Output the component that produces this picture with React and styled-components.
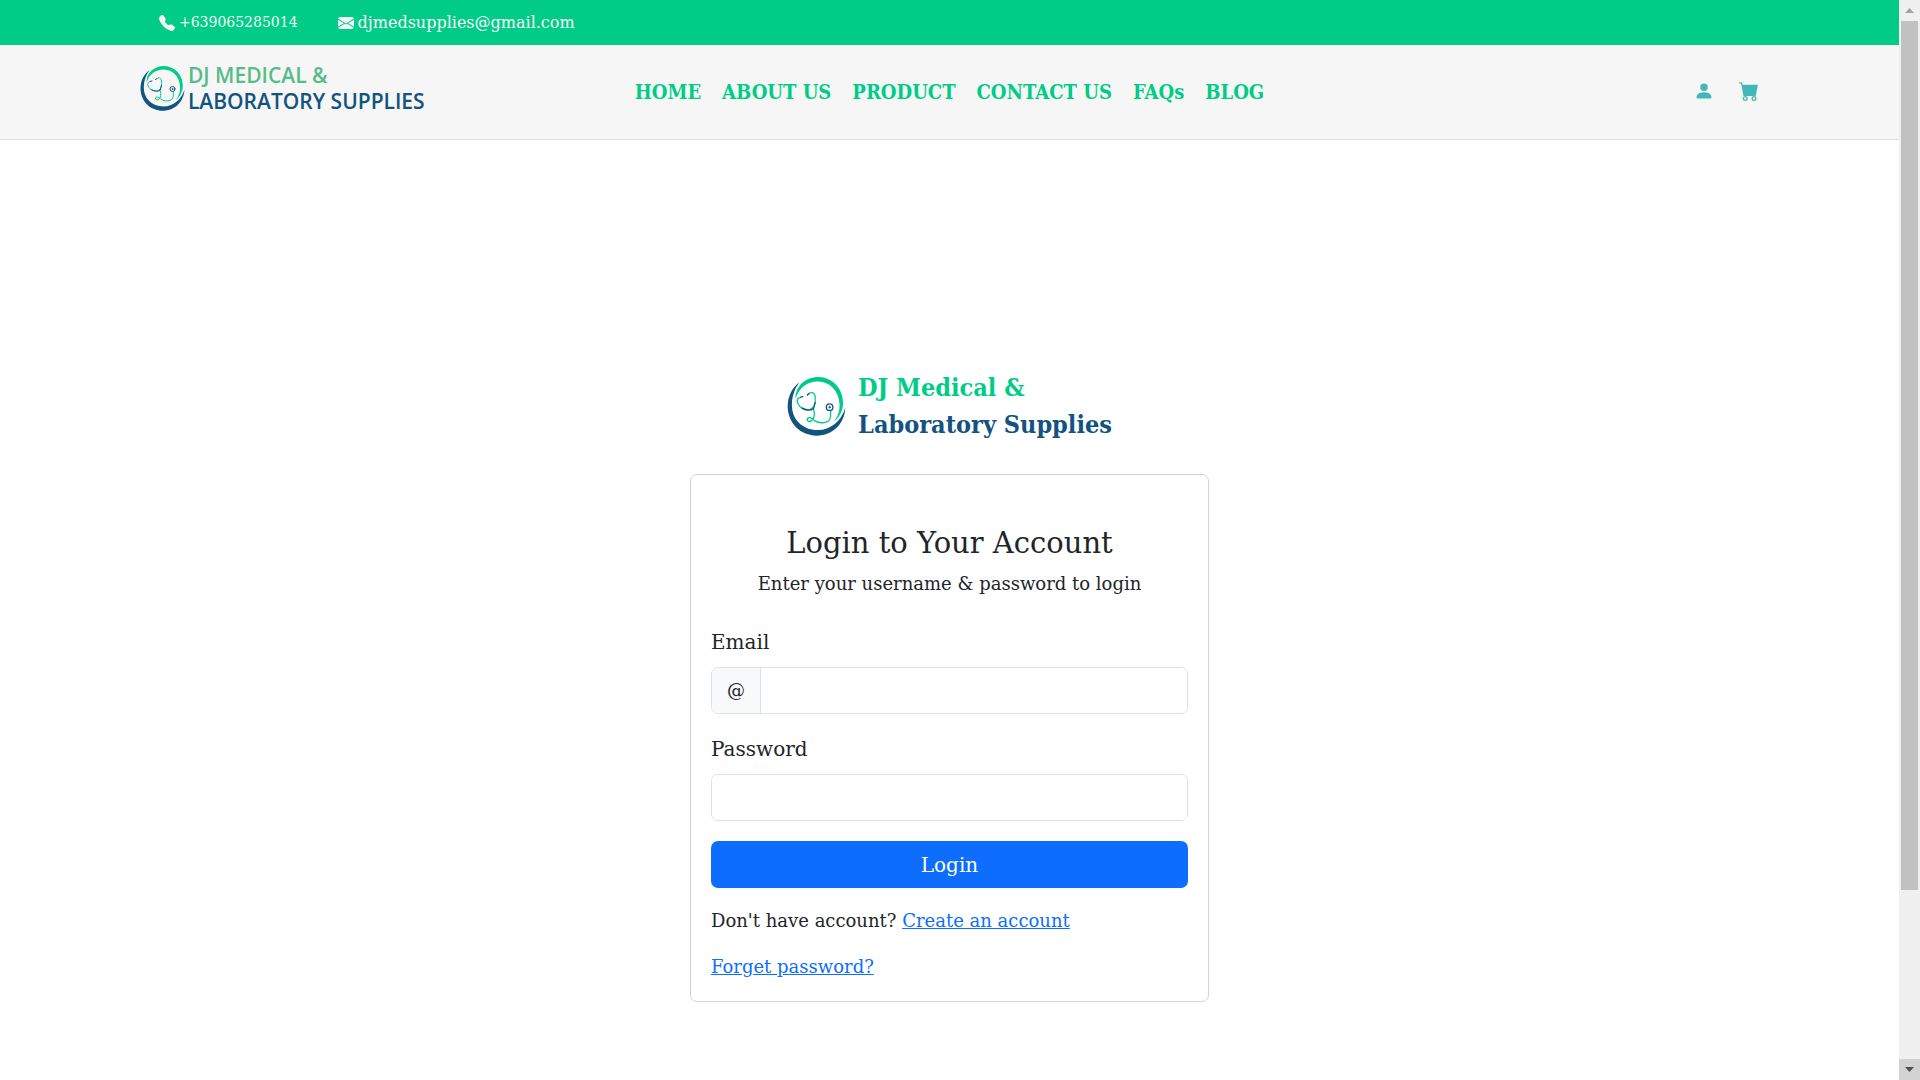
import React from "react";
import styled, { createGlobalStyle } from "styled-components";
import {
  BsTelephoneFill,
  BsEnvelopeFill,
  BsPersonFill,
  BsCartFill,
} from "react-icons/bs";

const GREEN = "#00cc88";
const NAVY = "#12537f";
const BLUE = "#0d6efd";
const BORDER = "#dee2e6";
const DISPLAY_FONT = '"DejaVu Serif Condensed", "DejaVu Serif", serif';

const GlobalStyle = createGlobalStyle`
  *, *::before, *::after { box-sizing: border-box; }
  body {
    margin: 0;
    overflow: hidden;
    background: #fff;
    color: #212529;
    font-family: "DejaVu Serif", serif;
    font-size: 18px;
    line-height: 28px;
  }
  h1, p { margin: 0; font-weight: 400; }
`;

const Shell = styled.div`
  display: grid;
  grid-template-columns: minmax(0, 1fr) 21px;
  height: 100vh;
`;

const Page = styled.div`
  overflow: hidden;
`;

const Container = styled.div`
  width: 86%;
  margin: 0 auto;
`;

const TopBar = styled.div`
  background: ${GREEN};
  color: #f6f6f6;
`;

const Contacts = styled(Container)`
  display: flex;
  gap: 40px;
  padding: 0 26px;
  line-height: 45px;
`;

const Contact = styled.a`
  display: flex;
  align-items: center;
  gap: 4px;
  color: inherit;
  text-decoration: none;
  font-size: ${(p) => p.$size}px;
`;

const Header = styled.header`
  background: #f6f6f6;
  border-bottom: 1px solid #dedede;
`;

const HeaderRow = styled(Container)`
  display: grid;
  grid-template-columns: 1fr auto 1fr;
  padding: 17px 7px 25px;
`;

const Brand = styled.a`
  display: flex;
  align-items: center;
  gap: 3px;
  text-decoration: none;
  color: ${NAVY};
  font: 600 21px/26px "Open Sans", sans-serif;
`;

const BrandGreen = styled.span`
  display: block;
  color: #55bd88;
`;

const Nav = styled.nav`
  display: flex;
  align-items: center;
  gap: 21px;
  padding-top: 8px;
`;

const NavLink = styled.a`
  color: ${GREEN};
  font-family: ${DISPLAY_FONT};
  font-size: 20px;
  font-weight: 700;
  text-decoration: none;
`;

const Tools = styled.div`
  display: flex;
  align-items: center;
  justify-content: flex-end;
  gap: 25px;
  padding-top: 6px;
`;

const IconButton = styled.button`
  display: flex;
  padding: 0;
  border: 0;
  background: none;
  color: #41b8b8;
`;

const Main = styled.main`
  display: flex;
  flex-direction: column;
  align-items: center;
  gap: 31px;
  padding: 229px 16px 64px;
`;

const Title = styled.a`
  display: flex;
  align-items: center;
  gap: 12px;
  color: ${NAVY};
  text-decoration: none;
  font-family: ${DISPLAY_FONT};
  font-size: 25px;
  font-weight: 700;
  line-height: 37px;
`;

const TitleGreen = styled.span`
  display: block;
  color: ${GREEN};
`;

const Card = styled.section`
  width: 100%;
  max-width: 519px;
  border: 1px solid #d3d4d5;
  border-radius: 7px;
  padding: 48px 20px 21px;
`;

const Heading = styled.h1`
  margin-bottom: 7px;
  font-size: 29px;
  line-height: 40px;
  text-align: center;
`;

const Lead = styled.p`
  margin-bottom: 29px;
  text-align: center;
`;

const Form = styled.form`
  display: flex;
  flex-direction: column;
  gap: 20px;
`;

const Field = styled.div`
  display: flex;
  flex-direction: column;
  gap: 10px;
`;

const Label = styled.label`
  font-size: 20px;
  line-height: 30px;
`;

const Group = styled.div`
  display: flex;
  height: 47px;
  border: 1px solid ${BORDER};
  border-radius: 7px;
  overflow: hidden;
`;

const Addon = styled.span`
  display: flex;
  align-items: center;
  padding: 0 15px;
  background: #f8f9fa;
  border-right: 1px solid ${BORDER};
`;

const Input = styled.input`
  flex: 1;
  min-width: 0;
  border: 0;
  padding: 0 15px;
  background: #fff;
  font: inherit;
  outline: none;
`;

const Submit = styled.button`
  height: 47px;
  border: 0;
  border-radius: 7px;
  background: ${BLUE};
  color: #fff;
  font: inherit;
  font-size: 20px;
`;

const Note = styled.p`
  line-height: 26px;
`;

const Link = styled.a`
  color: ${BLUE};
  text-decoration: underline;
`;

const ScrollTrack = styled.div`
  display: flex;
  flex-direction: column;
  background: #f0f0f0;
`;

const ScrollEnd = styled.div`
  display: flex;
  align-items: center;
  justify-content: center;
  height: 21px;
  background: ${(p) => p.$bg};
  color: ${(p) => p.$fg};
`;

const ScrollArea = styled.div`
  display: grid;
  grid-template-rows: 36fr 7fr;
  flex: 1;
  padding: 0 2px;
`;

const ScrollThumb = styled.div`
  background: #c1c1c1;
`;

function Emblem({ size }) {
  return (
    <svg width={size} height={size} viewBox="52 77 178 180" fill="none" aria-hidden="true">
      <path
        fill={GREEN}
        d="M77 143C76 104 108 77 147 77C190 78 222 112 222 156C222 180 211 200 194 213C206 197 213 180 211 157C208 118 181 92 147 91C114 90 88 110 77 143Z"
      />
      <path
        fill={NAVY}
        d="M89 94C66 109 53 137 53 168C54 219 93 256 142 256C190 256 226 221 229 171C216 212 184 239 145 239C98 238 65 207 66 160C67 133 75 112 89 94Z"
      />
      <g strokeWidth="4" strokeLinecap="round">
        <path
          stroke={GREEN}
          d="M88 141C78 145 82 158 91 168C99 175 110 179 122 176C137 171 138 150 137 137C136 124 124 120 118 129M132 176C137 190 134 205 125 211C117 215 111 211 113 204C118 197 128 203 135 210C148 219 174 220 182 205C185 196 185 188 184 180"
        />
        <path stroke={NAVY} d="M91 139L99 137M113 132L118 127M97 172C108 179 126 180 132 173L137 155" />
        <circle cx="181" cy="169" r="10" stroke={NAVY} />
        <circle cx="181" cy="169" r="3" fill={NAVY} stroke={NAVY} strokeWidth="1" />
      </g>
    </svg>
  );
}

const links = ["HOME", "ABOUT US", "PRODUCT", "CONTACT US", "FAQs", "BLOG"];

export default function App() {
  return (
    <Shell>
      <GlobalStyle />
      <Page>
        <TopBar>
          <Contacts>
            <Contact href="tel:+639065285014" $size={14}>
              <BsTelephoneFill size={16} />
              +639065285014
            </Contact>
            <Contact href="mailto:djmedsupplies@gmail.com" $size={16}>
              <BsEnvelopeFill size={16} />
              djmedsupplies@gmail.com
            </Contact>
          </Contacts>
        </TopBar>
        <Header>
          <HeaderRow>
            <Brand href="#home">
              <Emblem size={45} />
              <span>
                <BrandGreen>DJ MEDICAL &amp;</BrandGreen>
                LABORATORY SUPPLIES
              </span>
            </Brand>
            <Nav>
              {links.map((text) => (
                <NavLink key={text} href="#">
                  {text}
                </NavLink>
              ))}
            </Nav>
            <Tools>
              <IconButton type="button" aria-label="Account">
                <BsPersonFill size={20} />
              </IconButton>
              <IconButton type="button" aria-label="Cart">
                <BsCartFill size={20} />
              </IconButton>
            </Tools>
          </HeaderRow>
        </Header>
        <Main>
          <Title href="#home">
            <Emblem size={59} />
            <span>
              <TitleGreen>DJ Medical &amp;</TitleGreen>
              Laboratory Supplies
            </span>
          </Title>
          <Card>
            <Heading>Login to Your Account</Heading>
            <Lead>Enter your username &amp; password to login</Lead>
            <Form>
              <Field>
                <Label htmlFor="email">Email</Label>
                <Group>
                  <Addon>@</Addon>
                  <Input id="email" type="email" />
                </Group>
              </Field>
              <Field>
                <Label htmlFor="password">Password</Label>
                <Group>
                  <Input id="password" type="password" />
                </Group>
              </Field>
              <Submit type="submit">Login</Submit>
              <Note>
                Don't have account? <Link href="#register">Create an account</Link>
              </Note>
              <Note>
                <Link href="#forgot">Forget password?</Link>
              </Note>
            </Form>
          </Card>
        </Main>
      </Page>
      <ScrollTrack aria-hidden="true">
        <ScrollEnd $bg="#f0f0f0" $fg="#a3a3a3">
          <svg width="9" height="5" viewBox="0 0 9 5" fill="currentColor">
            <path d="M0 5L4.500 0L9 5Z" />
          </svg>
        </ScrollEnd>
        <ScrollArea>
          <ScrollThumb />
        </ScrollArea>
        <ScrollEnd $bg="#d2d2d2" $fg="#505050">
          <svg width="9" height="5" viewBox="0 0 9 5" fill="currentColor">
            <path d="M0 0L4.500 5L9 0Z" />
          </svg>
        </ScrollEnd>
      </ScrollTrack>
    </Shell>
  );
}
